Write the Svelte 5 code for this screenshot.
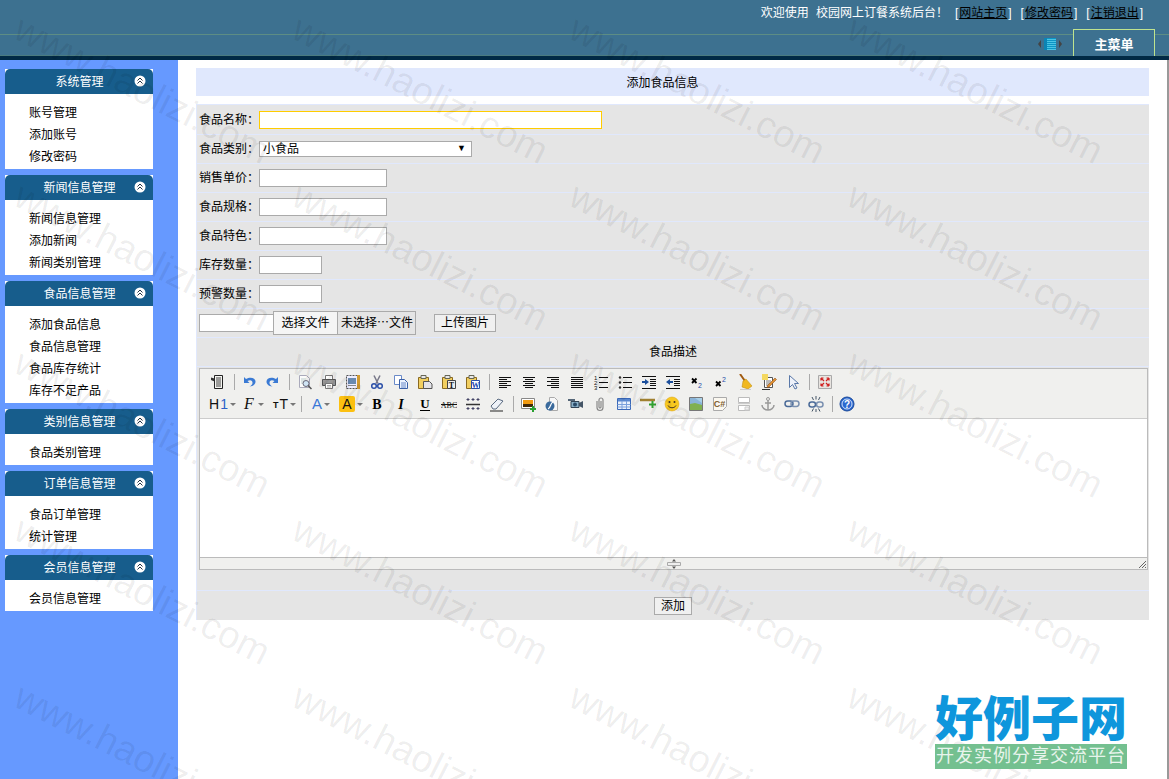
<script>
  const menus = [
    { title: '系统管理', items: ['账号管理', '添加账号', '修改密码'] },
    { title: '新闻信息管理', items: ['新闻信息管理', '添加新闻', '新闻类别管理'] },
    { title: '食品信息管理', items: ['添加食品信息', '食品信息管理', '食品库存统计', '库存不足产品'] },
    { title: '类别信息管理', items: ['食品类别管理'] },
    { title: '订单信息管理', items: ['食品订单管理', '统计管理'] },
    { title: '会员信息管理', items: ['会员信息管理'] }
  ];

  const fields = [
    { label: '食品名称：', cls: 'name' },
    { label: '食品类别：', select: true },
    { label: '销售单价：', cls: 'mid' },
    { label: '食品规格：', cls: 'mid' },
    { label: '食品特色：', cls: 'mid' },
    { label: '库存数量：', cls: 'small' },
    { label: '预警数量：', cls: 'small' }
  ];

  const line = (y, x1 = 2, x2 = 14, c = '#111') => `<path d="M${x1} ${y+.5}H${x2}" stroke="${c}"/>`;
  const lines = (rows, c) => rows.map(([y, a, b]) => line(y, a, b, c)).join('');
  const clip = '<path d="M1.500 3.500h10v11h-10z" fill="#f2cf60" stroke="#8a6a20"/><path d="M4 1.500h5v3H4z" fill="#e8e8e8" stroke="#665"/>';

  const icons = {
    source: '<path d="M4.500 1.500h8v13h-8z" fill="#f4f4f0" stroke="#222"/><path d="M6 4h5M6 6h5M6 8h5M6 10h5M6 12h5" stroke="#444"/><path d="M1 3.500l3.500 1v3L1 6z" fill="#333"/>',
    undo: '<path d="M3 3l0 6 5.500 0-2-2c3-1.600 5-.4 5 1.800 0 1.600-1 2.800-3 3.700 4.200-.2 6-2.400 6-4.900C14.500 4 9.500 2.200 5 5z" fill="#3a7ad4"/>',
    redo: '<path d="M13 3l0 6-5.500 0 2-2c-3-1.600-5-.4-5 1.800 0 1.600 1 2.800 3 3.700-4.200-.2-6-2.400-6-4.900C1.500 4 6.500 2.200 11 5z" fill="#3a7ad4"/>',
    preview: '<path d="M2.500 1.500h7l3 3v9h-10z" fill="#fbfbfb" stroke="#aab"/><path d="M4 5h5M4 7h4M4 9h3" stroke="#bcc"/><circle cx="9" cy="9.500" r="3" fill="#cfe4f5" stroke="#667"/><path d="M11 11.500l3.500 3.500" stroke="#555" stroke-width="1.500"/>',
    print: '<path d="M4.500 1.500h7v4h-7z" fill="#fff" stroke="#777"/><path d="M1.500 5.500h13v6h-13z" fill="#999" stroke="#555"/><path d="M4.500 9.500h7v5h-7z" fill="#fff" stroke="#777"/><path d="M6 11.500h4M6 13h4" stroke="#aaa"/>',
    template: '<path d="M1.500 1.500h11v13h-11z" fill="#eef" stroke="#555" stroke-dasharray="2 1"/><path d="M3 4h8v6H3z" fill="#6a8ab0"/><path d="M3 11.500h8" stroke="#888"/><path d="M12 1h3v14h-3z" fill="#d09a30"/>',
    cut: '<path d="M5 1.500l4 8M11 1.500l-4 8" stroke="#778" stroke-width="1.500"/><circle cx="5" cy="12" r="2.300" fill="none" stroke="#2c50a8" stroke-width="1.500"/><circle cx="11" cy="12" r="2.300" fill="none" stroke="#2c50a8" stroke-width="1.500"/>',
    copy: '<path d="M1.500 1.500h7v9h-7z" fill="#fff" stroke="#6a8ac8"/><path d="M6.500 5.500h5l3 3v6h-8z" fill="#eaf2ff" stroke="#3a60a8"/><path d="M8 9h5M8 11h5M8 13h5" stroke="#6a8ac8"/>',
    paste: clip + '<path d="M6.500 7.500h6l2.500 2.500v4.500H6.500z" fill="#e4e4e8" stroke="#555"/>',
    pastetext: clip + '<path d="M6.500 6.500h8v8h-8z" fill="#eee" stroke="#444"/><text x="10.500" y="13.500" font-size="8" font-weight="700" text-anchor="middle" font-family="Liberation Serif" fill="#111">T</text>',
    pasteword: clip + '<path d="M6.500 6.500h8v8h-8z" fill="#fff" stroke="#2a50a8"/><text x="10.500" y="13.500" font-size="8" font-weight="700" text-anchor="middle" font-family="Liberation Serif" fill="#1a48b0">W</text>',
    left: lines([[3,2,14],[5,2,10],[7,2,14],[9,2,10],[11,2,14],[13,2,10]]),
    center: lines([[3,2,14],[5,4,12],[7,2,14],[9,4,12],[11,2,14],[13,4,12]]),
    right: lines([[3,2,14],[5,6,14],[7,2,14],[9,6,14],[11,2,14],[13,6,14]]),
    justify: lines([[3,2,14],[5,2,14],[7,2,14],[9,2,14],[11,2,14],[13,2,14]]),
    ol: '<text x="1" y="6" font-size="6" font-family="Liberation Sans" fill="#111">1</text><text x="1" y="11" font-size="6" font-family="Liberation Sans" fill="#111">2</text><text x="1" y="16" font-size="6" font-family="Liberation Sans" fill="#111">3</text>' + lines([[3,6,15],[8,6,15],[13,6,15]]),
    ul: '<circle cx="3" cy="3.500" r="1.200" fill="#333"/><circle cx="3" cy="8.500" r="1.200" fill="#333"/><circle cx="3" cy="13.500" r="1.200" fill="#333"/>' + lines([[3,6,15],[8,6,15],[13,6,15]]),
    indent: lines([[2,1,15],[5,9,15],[7,9,15],[9,9,15],[11,9,15],[14,1,15]]) + '<path d="M1 7h3V5l4 3-4 3V9H1z" fill="#1c4f9c"/>',
    outdent: lines([[2,1,15],[5,9,15],[7,9,15],[9,9,15],[11,9,15],[14,1,15]]) + '<path d="M8 7H5V5L1 8l4 3V9h3z" fill="#1c4f9c"/>',
    sub: '<path d="M3 4.500l4.500 4.500M7.500 4.500L3 9" stroke="#000" stroke-width="1.800"/><text x="9" y="14" font-size="7" font-family="Liberation Sans" fill="#2a50a8">2</text>',
    sup: '<path d="M3 7.500l4.500 4.500M7.500 7.500L3 12" stroke="#000" stroke-width="1.800"/><text x="9" y="8" font-size="7" font-family="Liberation Sans" fill="#2a50a8">2</text>',
    brush: '<path d="M3 0l5 7" stroke="#a05a10" stroke-width="2"/><path d="M6 7l3-2 6 7-4 3-6-2z" fill="#f0b820" stroke="#b8860b" stroke-width=".5"/><path d="M3 15.500h11" stroke="#ccc"/>',
    format: '<path d="M3.500 3.500h8v10h-8z" fill="#fff" stroke="#555"/><path d="M5 7h5M5 9h4M5 11h3" stroke="#777"/><rect x="1" y="0" width="6" height="6" fill="#f4d860"/><path d="M1 15.500h8" stroke="#333"/><path d="M14 4l1.500 1.500L8 13l-2 .5.500-2z" fill="#e09030" stroke="#804010" stroke-width=".5"/>',
    select: '<path d="M4.500 1.500v12l3-3 2.500 4.500 2-1-2.500-4.500h4z" fill="#eef2fa" stroke="#5a78a8"/>',
    full: '<path d="M1.500 1.500h13v13h-13z" fill="#e8e4e0" stroke="#aaa"/><path d="M4 4l3 3M4 4h2.500M4 4v2.500M12 4L9 7M12 4H9.500M12 4v2.500M4 12l3-3M4 12h2.500M4 12V9.500M12 12L9 9M12 12H9.500M12 12V9.500" stroke="#d02020" fill="none" stroke-width="1.200"/>',
    bold: '<text x="8" y="13" font-size="14" font-weight="700" text-anchor="middle" font-family="Liberation Serif" fill="#000">B</text>',
    italic: '<text x="8" y="13" font-size="14" font-weight="700" font-style="italic" text-anchor="middle" font-family="Liberation Serif" fill="#000">I</text>',
    under: '<text x="8" y="12" font-size="13" font-weight="700" text-anchor="middle" font-family="Liberation Serif" fill="#000">U</text><path d="M3 14.500h10" stroke="#000"/>',
    strike: '<text x="8" y="11.500" font-size="8" text-anchor="middle" font-family="Liberation Serif" fill="#111">ABC</text><path d="M0 8.500h16" stroke="#111"/>',
    rule: '<path d="M1 8.500h14" stroke="#333" stroke-width="1.500"/><path d="M3 2v3M1.500 3.500h3M8 2v3M6.500 3.500h3M13 2v3M11.500 3.500h3M3 11v3M1.500 12.500h3M8 11v3M6.500 12.500h3M13 11v3M11.500 12.500h3" stroke="#446"/>',
    eraser: '<path d="M2 10l7-7 5 2-7 8-3 0z" fill="#eef2f8" stroke="#5a6a80"/><path d="M1 15h13" stroke="#222"/>',
    image: '<path d="M1.500 2.500h13v10h-13z" fill="#fff" stroke="#888"/><path d="M3 4h10v4H3z" fill="#f09a10"/><path d="M3 8h10v3H3z" fill="#402808"/><path d="M10 12h2v-2h2v2h2v2h-2v2h-2v-2h-2z" fill="#28a030"/>',
    flash: '<path d="M5.500 1.500h5l3 3v10h-8z" fill="#f8f8f8" stroke="#aaa"/><circle cx="6" cy="10" r="4.500" fill="#3a6a9c"/><path d="M4 13c3-1 2-6 5-7" stroke="#fff" stroke-width="1.200" fill="none"/>',
    video: '<path d="M3 5.500h8v6H3z" fill="#8ab0c8" stroke="#345"/><path d="M11 7l4-2v7l-4-2z" fill="#456"/><circle cx="7" cy="8.500" r="2" fill="#2a4a68"/><path d="M0 4h7" stroke="#567" stroke-width="2"/>',
    attach: '<path d="M5 5v6.500a3 3 0 0 0 6 0V4a2 2 0 0 0-4 0v7a1 1 0 0 0 2 0V5" fill="none" stroke="#888" stroke-width="1.200"/>',
    table: '<path d="M1.500 2.500h13v11h-13z" fill="#e8f0fc" stroke="#3a68b8"/><path d="M2 3h12v2.500H2z" fill="#5a88d0"/><path d="M1.500 8.500h13M1.500 11h13M6 5v8M10.500 5v8" stroke="#7aa0dc"/>',
    hr: '<path d="M0 4h15" stroke="#a08030" stroke-width="2.500"/><path d="M9 7.500h2.500V5h2v2.500H16v2h-2.500V12h-2V9.500H9z" fill="#30a030"/>',
    smile: '<circle cx="8" cy="8" r="7" fill="#f8c820" stroke="#d8a010" stroke-width=".5"/><circle cx="5.500" cy="6" r="1" fill="#432"/><circle cx="10.500" cy="6" r="1" fill="#432"/><path d="M4 9.500c1.500 3 6.500 3 8 0" fill="none" stroke="#432"/>',
    map: '<path d="M1.500 1.500h13v13h-13z" fill="#8ab4d8" stroke="#777"/><path d="M2 8l5-1 7 2v5H2z" fill="#80b050"/><path d="M7 2h7v5z" fill="#a8d0e8"/>',
    code: '<path d="M1.500 1.500h13v9l-4 4h-9z" fill="#fbf8f0" stroke="#aaa"/><text x="7.500" y="11" font-size="9" font-weight="700" text-anchor="middle" font-family="Liberation Sans" fill="#806030">C#</text>',
    page: '<path d="M2.500 1.500h11v5h-11zM2.500 9.500h11v5h-11z" fill="#fff" stroke="#bbb"/><path d="M2 7.500h12" stroke="#ccc"/><path d="M9 11h4v3H9z" fill="#eee" stroke="#ccc"/>',
    anchor: '<circle cx="8" cy="3" r="1.500" fill="none" stroke="#999"/><path d="M8 4.500V14M5 7h6" stroke="#999" stroke-width="1.500"/><path d="M2 9c0 3 3 5 6 5s6-2 6-5" fill="none" stroke="#999" stroke-width="1.500"/>',
    link: '<rect x="1" y="5" width="8" height="5.500" rx="2.700" fill="none" stroke="#4a6a98" stroke-width="1.500"/><rect x="7" y="5" width="8" height="5.500" rx="2.700" fill="none" stroke="#7a90b0" stroke-width="1.500"/>',
    unlink: '<rect x="1" y="6" width="6.500" height="5" rx="2.500" fill="none" stroke="#4a6a98" stroke-width="1.500"/><rect x="8.500" y="6" width="6.500" height="5" rx="2.500" fill="none" stroke="#7a90b0" stroke-width="1.500"/><path d="M8 0v3.500M4 1l1.500 3M12 1l-1.500 3M8 13v3M4 15.500L5.500 12.500M12 15.500l-1.500-3" stroke="#456"/>',
    help: '<circle cx="8" cy="8" r="7" fill="#2a68d0" stroke="#1a4898"/><circle cx="8" cy="8" r="5" fill="none" stroke="#fff" stroke-width=".8"/><text x="8" y="11.500" font-size="10" font-weight="700" text-anchor="middle" font-family="Liberation Sans" fill="#fff">?</text>'
  };

  const row1 = ['source', 7, 'undo', 'redo', 8, 'preview', 'print', 'template', 'cut', 'copy', 'paste', 'pastetext', 'pasteword', 8,
    'left', 'center', 'right', 'justify', 'ol', 'ul', 'indent', 'outdent', 'sub', 'sup', 'brush', 'format', 'select', 8, 'full'];
  const row2 = ['bold', 'italic', 'under', 'strike', 'rule', 'eraser', 7, 'image', 'flash', 'video', 'attach', 'table', 'hr', 'smile', 'map', 'code', 'page', 'anchor', 'link', 'unlink', 7, 'help'];

  const marks = [];
  for (const y of [7, 174, 341, 508, 675]) {
    for (const x of [27, 305, 582, 860]) marks.push({ x, y });
  }
</script>

<div class="page">
  <header class="top">
    <div class="welcome">
      <span>欢迎使用</span>
      <span class="site">校园网上订餐系统后台！</span>
      <span class="nav first">[<a href="#home">网站主页</a>]</span>
      <span class="nav">[<a href="#pwd">修改密码</a>]</span>
      <span class="nav">[<a href="#exit">注销退出</a>]</span>
    </div>
    <div class="tabs">
      <span class="switcher">
        <i class="tri tri-l"></i><i class="book"></i><i class="tri tri-r"></i>
      </span>
      <span class="tab">主菜单</span>
    </div>
  </header>

  <div class="body">
    <aside class="side">
      {#each menus as menu}
        <section class="group">
          <h3>
            <span>{menu.title}</span>
            <svg class="fold" width="12" height="12" viewBox="0 0 12 12">
              <circle cx="6" cy="6" r="5.500" fill="#fff"/>
              <path d="M3.500 5.500L6 3l2.500 2.500M3.500 8.500L6 6l2.500 2.500" fill="none" stroke="#234"/>
            </svg>
          </h3>
          <ul>
            {#each menu.items as item}
              <li>{item}</li>
            {/each}
          </ul>
        </section>
      {/each}
    </aside>

    <main class="main">
      <div class="title">添加食品信息</div>
      <form class="form">
        {#each fields as f}
          <div class="row">
            <label>{f.label}</label>
            {#if f.select}
              <span class="select"><select><option>小食品</option></select><b>▼</b></span>
            {:else}
              <input class={f.cls} />
            {/if}
          </div>
        {/each}

        <div class="row upload">
          <input class="path" />
          <span class="file"><span class="pick">选择文件</span><span class="none">未选择⋯文件</span></span>
          <button type="button" class="btn send">上传图片</button>
        </div>

        <div class="row center">食品描述</div>

        <div class="row editor-row">
          <div class="editor">
            <div class="bar">
              <div class="tools">
                {#each row1 as t}
                  {#if typeof t === 'number'}
                    <i class="sep" style="width:{t}px"></i>
                  {:else}
                    <span class="tool"><svg width="16" height="16" viewBox="0 0 16 16">{@html icons[t]}</svg></span>
                  {/if}
                {/each}
              </div>
              <div class="tools">
                <span class="combo h1">H<em>1</em><u></u></span>
                <span class="combo ff"><b>F</b><u></u></span>
                <span class="combo tt"><small>T</small>T<u></u></span>
                <i class="sep" style="width:9px"></i>
                <span class="combo fc">A<u></u></span>
                <span class="combo bc"><s>A</s><u></u></span>
                {#each row2 as t}
                  {#if typeof t === 'number'}
                    <i class="sep" style="width:{t}px"></i>
                  {:else}
                    <span class="tool"><svg width="16" height="16" viewBox="0 0 16 16">{@html icons[t]}</svg></span>
                  {/if}
                {/each}
              </div>
            </div>
            <div class="area"></div>
            <div class="status">
              <svg class="drag" width="16" height="10" viewBox="0 0 16 10">
                <path d="M8 0l2 2.500H6zM8 10l2-2.500H6z" fill="#555"/>
                <path d="M1.500 3.500h13v3h-13z" fill="#eee" stroke="#aaa"/>
              </svg>
              <svg class="grip" width="9" height="9" viewBox="0 0 9 9">
                <path d="M1 8l7-7M4 8l4-4M7 8l1-1" stroke="#666"/>
              </svg>
            </div>
          </div>
        </div>

        <div class="row center last"><button type="button" class="btn">添加</button></div>
      </form>
    </main>
  </div>

  <div class="marks">
    {#each marks as m}
      <span style="left:{m.x}px;top:{m.y}px">www.haolizi.com</span>
    {/each}
  </div>

  <div class="logo">
    <strong>好例子网</strong>
    <span>开发实例分享交流平台</span>
  </div>
</div>

<style>
  :global(body) { margin:0; background:#fff; }
  .page { position:relative; width:1169px; height:779px; overflow:hidden; font:12px/1.2 "Liberation Sans","Noto Sans CJK SC",sans-serif; color:#000; }

  .top { height:56px; background:#3d7190; border-bottom:4px solid #012a45; box-shadow:inset 0 -1px 0 #4b7b7f; color:#fff; }
  .welcome { display:flex; justify-content:flex-end; height:35px; padding:6px 26px 0 0; box-sizing:border-box; border-bottom:1px solid #5d8d84; line-height:15px; }
  .site { margin-left:7px; }
  .nav { margin-left:9px; }
  .nav.first { margin-left:7px; }
  .nav a { color:#000; text-decoration:underline; margin:0 1px; }
  .tabs { display:flex; justify-content:flex-end; align-items:flex-start; padding-right:14px; }
  .switcher { display:flex; align-items:center; gap:3px; margin:3px 11px 0 0; }
  .tri { width:0; height:0; border:3px solid transparent; border-top-width:4px; border-bottom-width:4px; }
  .tri-l { border-right-color:#444; border-left-width:0; }
  .tri-r { border-left-color:#444; border-right-width:0; }
  .book { width:12px; height:12px; background:repeating-linear-gradient(#0c95c4 0 1px,#4cc4e4 1px 2px); border-left:3px solid #0c84b4; box-sizing:border-box; }
  .tab { width:82px; height:27px; margin-top:-6px; box-sizing:border-box; border:1px solid #bfe38f; border-bottom:0; background:#3d7190; text-align:center; line-height:30px; font-weight:700; font-size:13px; color:#fff; }

  .body { display:grid; grid-template-columns:178px 1fr; height:719px; }
  .side { background:#6699ff; padding:9px 25px 0 5px; }
  .group { margin-bottom:6px; background:#fff; }
  .group h3 { position:relative; margin:0; height:25px; background:#175d8c; border-radius:5px 5px 0 0; color:#fff; font-size:12px; font-weight:400; line-height:27px; text-align:center; }
  .group h3 span { margin-right:-1px; }
  .fold { position:absolute; right:7px; top:6px; }
  .group ul { list-style:none; margin:0; padding:8px 0 1px 24px; }
  .group li { height:22px; line-height:22px; }

  .main { padding:8px 18px 0; border-right:2px solid #999; }
  .title { height:28px; padding-right:20px; background:#e0e8fd; text-align:center; line-height:31px; margin-bottom:8px; }
  .form { background:#e5e5e5; border:solid #e0e8fd; border-width:1px 0 0 1px; }
  .row { display:flex; align-items:center; height:28px; border-bottom:1px solid #e0e8fd; padding-left:2px; }
  .row label { width:60px; padding-top:1px; }
  input { box-sizing:border-box; height:18px; padding:0 3px; border:1px solid #aaa; background:#fff; outline:0; font:inherit; }
  .name { width:343px; border-color:#fc0; }
  .mid { width:128px; }
  .small { width:63px; }
  .select { position:relative; display:block; width:213px; height:16px; }
  .select select { appearance:none; width:100%; height:16px; border:1px solid #aaa; border-radius:0; background:#fff; padding:0 3px; font:inherit; color:#000; line-height:14px; }
  .select b { position:absolute; right:6px; top:2px; font-size:9px; font-weight:400; }
  .upload .path { width:75px; }
  .file { display:flex; align-items:center; width:143px; height:24px; box-sizing:border-box; border:1px solid #aaa; margin-left:-1px; }
  .pick { width:64px; height:22px; line-height:22px; text-align:center; background:#f5f5f5; border-right:1px solid #aaa; box-sizing:border-box; }
  .none { padding-left:3px; white-space:nowrap; }
  .btn { height:18px; box-sizing:border-box; border:1px solid #aaa; background:#f0f0f0; padding:0 6px; font:inherit; line-height:16px; color:#000; }
  .send { margin-left:18px; }
  .center { justify-content:center; padding-left:0; }
  .editor-row { height:224px; align-items:flex-start; padding-top:1px; box-sizing:border-box; }
  .last { height:29px; border-bottom:0; }
  .row:first-child { height:29px; }

  .editor { width:949px; height:202px; box-sizing:border-box; border:1px solid #bbb; background:#f0f0ee; display:flex; flex-direction:column; }
  .bar { height:50px; padding:2px 0 0 6px; box-sizing:border-box; border-bottom:1px solid #ccc; }
  .tools { display:flex; align-items:center; height:22px; }
  .tool { width:24px; height:22px; display:flex; align-items:center; justify-content:center; }
  .tool svg { display:block; }
  .sep { display:block; height:16px; position:relative; }
  .sep::after { content:""; position:absolute; left:50%; top:0; width:1px; height:16px; background:#aaa; }
  .combo { width:30px; height:22px; display:flex; align-items:center; gap:1px; padding-left:3px; box-sizing:border-box; font-size:14px; color:#111; }
  .combo u { width:0; height:0; border:3px solid transparent; border-top-color:#777; border-bottom-width:0; margin-left:1px; }
  .h1 em { font-style:normal; color:#2a60c8; }
  .ff { padding-left:8px; }
  .ff b { font:italic 400 16px "Liberation Serif",serif; margin-right:2px; }
  .tt { padding-left:7px; }
  .tt small { font-size:9px; font-weight:700; margin-top:3px; }
  .fc { padding-left:7px; color:#3a78d8; font-size:15px; }
  .bc { padding-left:4px; }
  .bc s { width:16px; height:16px; background:#fcc010; border-radius:2px; text-decoration:none; text-align:center; line-height:16px; }
  .area { flex:1; background:#fff; }
  .status { position:relative; height:11px; border-top:1px solid #bbb; display:flex; justify-content:center; align-items:center; }
  .grip { position:absolute; right:0; bottom:0; }

  .marks { position:absolute; inset:0; pointer-events:none; }
  .marks span { position:absolute; font:300 38px "Liberation Sans",sans-serif; color:rgba(0,0,0,.07); white-space:nowrap; transform-origin:0 0; transform:rotate(27deg); }

  .logo { position:absolute; left:935px; top:692px; width:192px; }
  .logo strong { display:block; margin-bottom:5px; font:900 48px/47px "Noto Sans CJK SC",sans-serif; color:#0e96dc; white-space:nowrap; }
  .logo span { display:block; height:25px; background:#74c090; color:#e8f4ec; font-size:18px; line-height:25px; text-align:center; letter-spacing:1px; white-space:nowrap; overflow:hidden; }
</style>
